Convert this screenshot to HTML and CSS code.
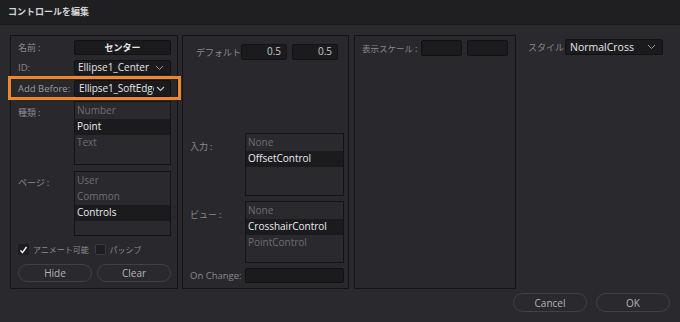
FILE: index.html
```html
<!DOCTYPE html>
<html lang="ja">
<head>
  <meta charset="UTF-8" />
  <title>コントロールを編集</title>
  <link rel="stylesheet" href="styles.css">
</head>
<body>
  <div class="dialog">
    <div class="title-bar">コントロールを編集</div>

    <div class="main">
      <!-- left panel -->
      <div class="panel panel-general">
        <div class="row row-name">
          <span class="label jp">名前 :</span>
          <div class="field field-center">センター</div>
        </div>
        <div class="row row-id">
          <span class="label">ID:</span>
          <div class="field dropdown">
            <span class="value">Ellipse1_Center</span>
            <svg class="chevron" width="9" height="6" viewBox="0 0 9 6"><path d="M1 1l3.5 3.5L8 1" fill="none" stroke="#9a9a9e" stroke-width="1"/></svg>
          </div>
        </div>
        <div class="highlight">
          <div class="row row-before">
            <span class="label">Add Before:</span>
            <div class="field dropdown">
              <span class="value">Ellipse1_SoftEdge</span>
              <svg class="chevron" width="9" height="6" viewBox="0 0 9 6"><path d="M1 1l3.5 3.5L8 1" fill="none" stroke="#c8c8cc" stroke-width="1.1"/></svg>
            </div>
          </div>
        </div>
        <div class="row row-list">
          <span class="label jp">種類 :</span>
          <ul class="list list-type">
            <li>Number</li>
            <li class="selected">Point</li>
            <li>Text</li>
          </ul>
        </div>
        <div class="row row-list row-page">
          <span class="label jp">ページ :</span>
          <ul class="list list-page">
            <li>User</li>
            <li>Common</li>
            <li class="selected">Controls</li>
          </ul>
        </div>
        <div class="checks">
          <label class="check">
            <span class="box checked">
              <svg width="12" height="12" viewBox="0 0 12 12"><path d="M2 6.5l2.6 3L10 2" fill="none" stroke="#f2f2f2" stroke-width="2"/></svg>
            </span>
            <span class="jp">アニメート可能</span>
          </label>
          <label class="check">
            <span class="box"></span>
            <span class="jp">パッシブ</span>
          </label>
        </div>
        <div class="buttons">
          <button class="btn">Hide</button>
          <button class="btn">Clear</button>
        </div>
      </div>

      <!-- middle panel -->
      <div class="panel panel-values">
        <div class="default-row">
          <span class="label jp">デフォルト :</span>
          <div class="field num">0.5</div>
          <div class="field num">0.5</div>
        </div>
        <div class="bottom-group">
          <div class="row row-list2">
            <span class="label jp">入力 :</span>
            <ul class="list list-input">
              <li>None</li>
              <li class="selected">OffsetControl</li>
            </ul>
          </div>
          <div class="row row-list2">
            <span class="label jp">ビュー :</span>
            <ul class="list list-view">
              <li>None</li>
              <li class="selected">CrosshairControl</li>
              <li>PointControl</li>
            </ul>
          </div>
          <div class="row row-change">
            <span class="label">On Change:</span>
            <div class="field"></div>
          </div>
        </div>
      </div>

      <!-- scale panel -->
      <div class="panel panel-scale">
        <div class="scale-row">
          <span class="label jp">表示スケール :</span>
          <div class="field"></div>
          <div class="field"></div>
        </div>
      </div>

      <!-- style -->
      <div class="style-area">
        <span class="label jp">スタイル :</span>
        <div class="field dropdown style-drop">
          <span class="value">NormalCross</span>
          <svg class="chevron" width="9" height="6" viewBox="0 0 9 6"><path d="M1 1l3.5 3.5L8 1" fill="none" stroke="#9a9a9e" stroke-width="1"/></svg>
        </div>
      </div>
    </div>

    <div class="footer">
      <button class="btn btn-footer">Cancel</button>
      <button class="btn btn-footer">OK</button>
    </div>
  </div>
</body>
</html>
```

FILE: styles.css
```css
* {
  box-sizing: border-box;
  margin: 0;
  padding: 0;
}

body {
  width: 680px;
  height: 322px;
  background: #29292e;
  font-family: 'Open Sans', 'Noto Sans CJK JP', sans-serif;
  font-size: 10px;
  color: #8c8c90;
  overflow: hidden;
}

.dialog {
  display: flex;
  flex-direction: column;
  height: 322px;
}

.title-bar {
  height: 25px;
  background: #1f1f22;
  border-bottom: 1px solid #18181a;
  color: #d6d6d8;
  font-family: 'Noto Sans CJK JP', sans-serif;
  font-size: 9px;
  font-weight: 700;
  padding: 5px 0 0 8px;
}

.main {
  display: flex;
  padding: 10px 0 0 10px;
  height: 264px;
}

.panel {
  background: #28282d;
  border: 1px solid #141416;
  height: 254px;
}

.label {
  white-space: nowrap;
  color: #88888c;
  font-size: 9.5px;
}

.jp {
  font-family: 'Noto Sans CJK JP', sans-serif;
  font-size: 9px;
}

.field {
  background: #1b1b1e;
  border: 1px solid #121214;
  border-radius: 2px;
  color: #e6e6e8;
  height: 15px;
  line-height: 13px;
  white-space: nowrap;
  overflow: hidden;
}

.dropdown {
  display: flex;
  align-items: center;
  padding: 0 6px 0 3px;
}

.dropdown .value {
  flex: 1;
  overflow: hidden;
}

.chevron {
  flex: none;
  margin-left: 3px;
}

/* left panel */
.panel-general {
  width: 168px;
  padding: 4px 6px 0 7px;
  display: flex;
  flex-direction: column;
}

.row {
  display: flex;
  align-items: center;
}

.row .label {
  width: 56px;
  flex: none;
}

.row .field,
.row .list {
  width: 97px;
}

.field-center {
  text-align: center;
  font-family: 'Noto Sans CJK JP', sans-serif;
  font-size: 9px;
  font-weight: 700;
}

.row-id {
  margin-top: 5px;
}

.highlight {
  margin: 1px -10px 0;
  padding: 1px 6px 0 7px;
  border: 3px solid #ef8731;
}

.row-before .field {
  height: 17px;
  padding: 0 5px 0 4px;
}

.row-before .value {
  letter-spacing: -0.1px;
}

.row-before .chevron {
  margin-left: 2px;
}

.row-before .label {
  color: #9a9a9e;
  font-size: 9.5px;
}

.row-list {
  align-items: flex-start;
  margin-top: 1px;
}

.row-list .label {
  padding-top: 5px;
}

.row-page {
  margin-top: 6px;
}

.list {
  list-style: none;
  background: #29292e;
  border: 1px solid #141416;
  height: 64px;
  padding-top: 1px;
}

.list-page {
  height: 65px;
}

.list li {
  height: 16px;
  line-height: 15px;
  padding-left: 2px;
  color: #6e6e72;
}

.list li.selected {
  background: #1b1b1e;
  color: #ececee;
}

.checks {
  display: flex;
  margin-top: 7px;
  height: 13px;
}

.check {
  display: flex;
  align-items: center;
  gap: 4px;
  width: 80px;
  white-space: nowrap;
  color: #8c8c90;
}

.check .jp {
  font-size: 8px;
}

.box {
  width: 11px;
  height: 11px;
  border: 1px solid #3a3a3f;
  border-radius: 2px;
  background: #1e1e21;
  display: flex;
  align-items: center;
  justify-content: center;
}

.box.checked {
  border-color: #1e1e21;
}

.buttons {
  display: flex;
  gap: 5px;
  margin-top: 8px;
}

.btn {
  font-family: 'Open Sans', sans-serif;
  font-size: 10px;
  color: #b4b4b8;
  background: #29292e;
  border: 1px solid #404045;
  border-radius: 10px;
  width: 75px;
  height: 18px;
}

/* middle panel */
.panel-values {
  width: 167px;
  margin-left: 4px;
  padding: 8px 4px 5px 7px;
  display: flex;
  flex-direction: column;
}

.default-row {
  display: flex;
  align-items: center;
  gap: 5px;
  padding-left: 6px;
}

.default-row .label {
  width: 40px;
}

.num {
  width: 46px;
  height: 16px;
  text-align: right;
  padding-right: 5px;
  color: #c8c8cc;
}

.bottom-group {
  margin-top: auto;
  display: flex;
  flex-direction: column;
  gap: 5px;
}

.row-list2 {
  align-items: flex-start;
}

.row-list2 .label,
.row-change .label {
  width: 55px;
  flex: none;
}

.row-list2 .label {
  padding-top: 7px;
}

.row-list2 .list {
  width: 99px;
  height: 63px;
}

.row-list2 .list-view {
  height: 62px;
}

.row-change .field {
  width: 99px;
}

/* scale panel */
.panel-scale {
  width: 162px;
  margin-left: 5px;
  padding: 4px 7px 0 7px;
}

.scale-row {
  display: flex;
  align-items: center;
  gap: 5px;
}

.scale-row .label {
  width: 54px;
  font-size: 8.5px;
}

.scale-row .field {
  width: 41px;
  height: 16px;
}

/* style */
.style-area {
  display: flex;
  align-items: center;
  gap: 5px;
  padding: 4px 0 0 12px;
  height: 20px;
}

.style-area .label {
  width: 32px;
}

.style-drop {
  width: 98px;
  height: 16px;
  padding-left: 4px;
  font-size: 10.5px;
}

/* footer */
.footer {
  display: flex;
  justify-content: flex-end;
  gap: 9px;
  padding: 4px 10px 0 0;
}

.btn-footer {
  width: 74px;
  height: 19px;
}
```
